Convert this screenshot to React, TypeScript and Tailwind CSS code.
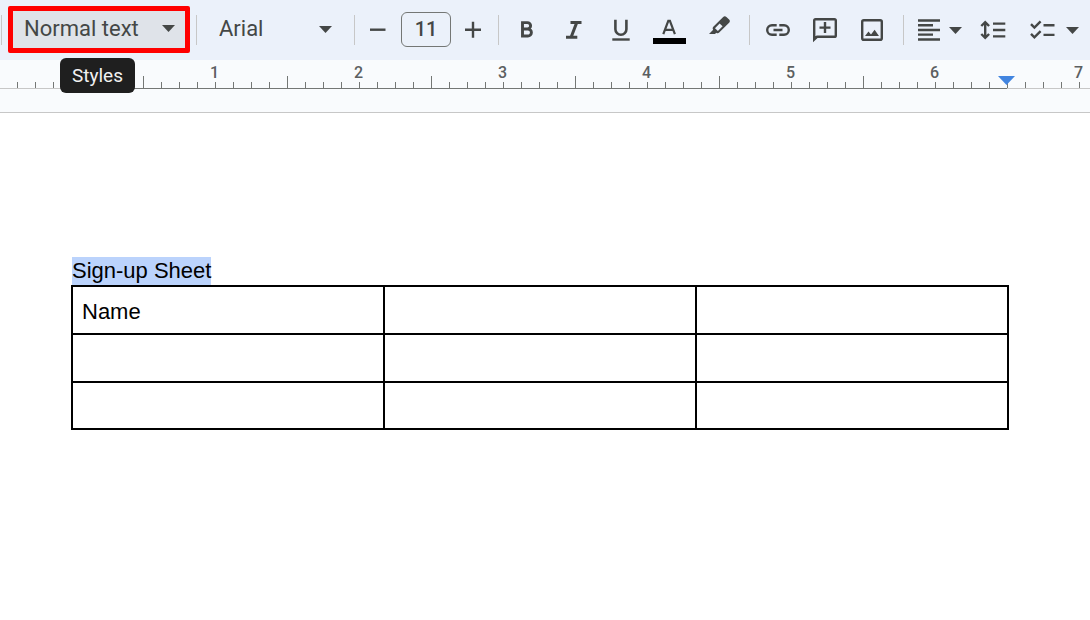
import React, { useState } from 'react';

const RULER_TICKS = Array.from({ length: 61 }, (_, i) => i);

const ROWS = [
  ['Name', '', ''],
  ['', '', ''],
  ['', '', '']
];

interface IconProps {
  children: React.ReactNode;
}

const Icon: React.FC<IconProps> = ({ children }) => (
  <svg
    viewBox="0 0 32 32"
    className="block h-8 w-8"
    fill="none"
    stroke="currentColor"
    strokeWidth="2.4"
    aria-hidden="true"
  >
    {children}
  </svg>
);

const Caret = () => (
  <svg viewBox="0 0 13 7" className="block h-[7px] w-[13px] shrink-0" fill="currentColor" aria-hidden="true">
    <path d="M0 0h13L6.5 7z" />
  </svg>
);

const Divider = ({ className = '' }: { className?: string }) => (
  <div className={`h-[30px] w-px shrink-0 bg-[#c7c7c7] ${className}`} />
);

interface ToolButtonProps {
  label: string;
  className?: string;
  children: React.ReactNode;
}

const ToolButton: React.FC<ToolButtonProps> = ({ label, className = '', children }) => (
  <button
    type="button"
    aria-label={label}
    className={`flex h-8 shrink-0 items-center rounded hover:bg-[#dfe3e9] ${className}`}
  >
    {children}
  </button>
);

const Toolbar = () => {
  const [size, setSize] = useState(11);

  return (
    <header className="flex h-[60px] items-center overflow-hidden bg-[#ebf1fa] text-[#444746]">
      <Divider className="ml-px" />

      <div className="mb-[2px] ml-[6px] grid h-[47px] w-[182px] shrink-0 items-center rounded-xs border-[5px] border-[#ff0000] bg-[#dfe3e9]">
        <select
          aria-label="Styles"
          className="col-start-1 row-start-1 h-full w-full appearance-none pl-[11px] text-[22px] leading-7 outline-none"
        >
          <option>Normal text</option>
          <option>Title</option>
          <option>Heading 1</option>
        </select>
        <span className="pointer-events-none col-start-1 row-start-1 mr-[10px] mb-[2px] justify-self-end">
          <Caret />
        </span>
      </div>

      <Divider className="ml-[6px]" />

      <div className="mb-[2px] ml-[22px] grid w-[113px] shrink-0 items-center">
        <select
          aria-label="Font"
          className="col-start-1 row-start-1 w-full appearance-none text-[22px] leading-7 outline-none"
        >
          <option>Arial</option>
          <option>Georgia</option>
        </select>
        <span className="pointer-events-none col-start-1 row-start-1 justify-self-end">
          <Caret />
        </span>
      </div>

      <Divider className="ml-[22px]" />

      <div className="mb-px ml-[7px] flex shrink-0 items-center gap-[7px]">
        <button type="button" aria-label="Decrease font size" onClick={() => setSize(size - 1)}>
          <Icon>
            <path d="M8 15.7h15.5" />
          </Icon>
        </button>
        <input
          aria-label="Font size"
          value={size}
          onChange={(e) => setSize(Number(e.target.value) || 1)}
          className="h-[35px] w-[50px] rounded-md border border-[#747775] bg-transparent pb-px text-center text-[20px] font-medium outline-none"
        />
        <button type="button" aria-label="Increase font size" onClick={() => setSize(size + 1)}>
          <Icon>
            <path d="M7 15.7h16M15 7.7v16" />
          </Icon>
        </button>
      </div>

      <Divider className="ml-2" />

      <div className="ml-3 flex shrink-0 items-center gap-[15px]">
        <ToolButton label="Bold">
          <Icon>
            <path
              strokeWidth="2.9"
              d="M11.5 8.6h4.9a3.2 3.2 0 0 1 0 6.4h-4.9M16.4 15h.5a3.5 3.5 0 0 1 0 7h-5.4V7.2"
            />
          </Icon>
        </ToolButton>
        <ToolButton label="Italic">
          <Icon>
            <path strokeWidth="3" d="M12.5 8.6h11M8 23.3h11.3M18.7 8.6l-5.6 14.7" />
          </Icon>
        </ToolButton>
        <ToolButton label="Underline">
          <Icon>
            <path strokeWidth="2.6" d="M10.4 5.8v9.4a5.5 5.5 0 0 0 11 0V5.8" />
            <path d="M7.3 25.5h17.4" />
          </Icon>
        </ToolButton>
        <ToolButton label="Text color">
          <svg viewBox="0 0 34 32" className="block h-8 w-[34px]" fill="none" stroke="currentColor" aria-hidden="true">
            <path strokeWidth="2.2" d="M11.3 20.2l5-13.4h1.6l5 13.4M13.2 15.9h8" />
            <path fill="#000" stroke="none" d="M1 24h33v6H1z" />
          </svg>
        </ToolButton>
        <ToolButton label="Highlight color">
          <Icon>
            <path
              fill="currentColor"
              stroke="none"
              fillRule="evenodd"
              d="M8 20l4.2-4.3c-.8-1-.7-2.1.1-2.9L22.2 2.9c1-1 2.2-1 3.2 0l2.7 2.7c1 1 1 2.2 0 3.2L18.2 18.6c-.8.8-2 .9-2.9.1L14 20zM18.6 9.4l-4.6 4.8 2.9 2.9 4.7-4.8z"
            />
          </Icon>
        </ToolButton>
      </div>

      <Divider className="ml-4" />

      <div className="ml-3 flex shrink-0 items-center gap-[15px]">
        <ToolButton label="Insert link">
          <Icon>
            <path d="M14.7 11.2H10a4.8 4.8 0 0 0 0 9.6h4.7M17.3 11.2H22a4.8 4.8 0 0 1 0 9.6h-4.7M11.5 16h9" />
          </Icon>
        </ToolButton>
        <ToolButton label="Add comment">
          <Icon>
            <path d="M5.2 25.5V6.6a1.4 1.4 0 0 1 1.4-1.4h18.8a1.4 1.4 0 0 1 1.4 1.4v14.8a1.4 1.4 0 0 1-1.4 1.4H8z" />
            <path fill="currentColor" stroke="none" d="M4 21.8v5.4l5-4.6z" />
            <path d="M10.5 13.6h11M16 8.1v11" />
          </Icon>
        </ToolButton>
        <ToolButton label="Insert image">
          <Icon>
            <rect x="6.2" y="6.2" width="19.6" height="19.6" rx="1.6" />
            <path fill="currentColor" stroke="none" d="M9 22l3.5-4.6 2.5 3 3.6-4.6L23 22z" />
          </Icon>
        </ToolButton>
      </div>

      <Divider className="ml-[15px]" />

      <ToolButton label="Align" className="ml-[9px] gap-1">
        <Icon>
          <path d="M5 6.5h22M5 11.3h15M5 16h22M5 20.6h15M5 25.5h22" />
        </Icon>
        <Caret />
      </ToolButton>
      <ToolButton label="Line spacing" className="ml-[15px]">
        <Icon>
          <path d="M16 9.6h12.3M16 16h12.3M16 22.4h12.3M8.2 8.8v14.4M4.3 12l3.9-3.9 3.9 3.9M4.3 20l3.9 3.9 3.9-3.9" />
        </Icon>
      </ToolButton>
      <ToolButton label="Checklist" className="ml-[21px] gap-1">
        <Icon>
          <path d="M13.5 11.2h11M13.5 20.9h11M1 10.2l3.4 3.4 6.2-6.2M1 19.9l3.4 3.4 6.2-6.2" />
        </Icon>
        <Caret />
      </ToolButton>
    </header>
  );
};

const Ruler = () => (
  <div className="relative h-[53px] border-b border-[#c7c7c7] bg-[#f9fbfd]">
    <div className="flex h-7 items-end overflow-hidden pl-2">
      {RULER_TICKS.map((i) => {
        const isHalf = i % 8 === 7;
        const isInch = i % 8 === 3 && i > 3;
        return (
          <div key={i} className="w-[18px] shrink-0">
            {isInch && (
              <div className="h-[22px] pr-px text-center text-[16px] leading-[26px] font-medium text-[#5c5f61]">
                {(i - 3) / 8}
              </div>
            )}
            <div className={`ml-[9px] w-px bg-[#747775] ${isHalf ? 'h-3' : 'h-[6px]'}`} />
          </div>
        );
      })}
    </div>
    <div className="flex h-px">
      <div className="w-[72px] bg-[#c7c7c7]" />
      <div className="w-[935px] bg-[#747775]" />
      <div className="flex-1 bg-[#c7c7c7]" />
    </div>

    {/* right indent marker */}
    <svg viewBox="0 0 17 9" className="absolute top-4 left-[998px] h-[9px] w-[17px]" fill="#4285e0" aria-hidden="true">
      <path d="M0 0h17L8.5 9z" />
    </svg>
    <div
      role="tooltip"
      className="absolute -top-[2px] left-[60px] h-[35px] rounded-md bg-[#1f1f1f] px-3 text-[19px] leading-[35px] text-[#f2f2f2]"
    >
      Styles
    </div>
  </div>
);

const App = () => (
  <div className="min-h-screen bg-white font-[Roboto,sans-serif]">
    <Toolbar />
    <Ruler />
    <main className="pt-36 pr-[81px] pl-[71px] font-['Liberation_Sans',Arial,sans-serif] text-[22px] text-black">
      <p className="ml-px h-7 leading-7">
        <span className="inline-block bg-[#bbd3fc]">Sign-up Sheet</span>
      </p>
      <table className="w-full table-fixed border-collapse">
        <tbody>
          {ROWS.map((row, r) => (
            <tr key={r} className="h-12 last:h-[47px]">
              {row.map((cell, c) => (
                <td key={c} className="border-2 border-black px-[9px] pt-1 leading-7">
                  {cell}
                </td>
              ))}
            </tr>
          ))}
        </tbody>
      </table>
    </main>
  </div>
);

export default App;
